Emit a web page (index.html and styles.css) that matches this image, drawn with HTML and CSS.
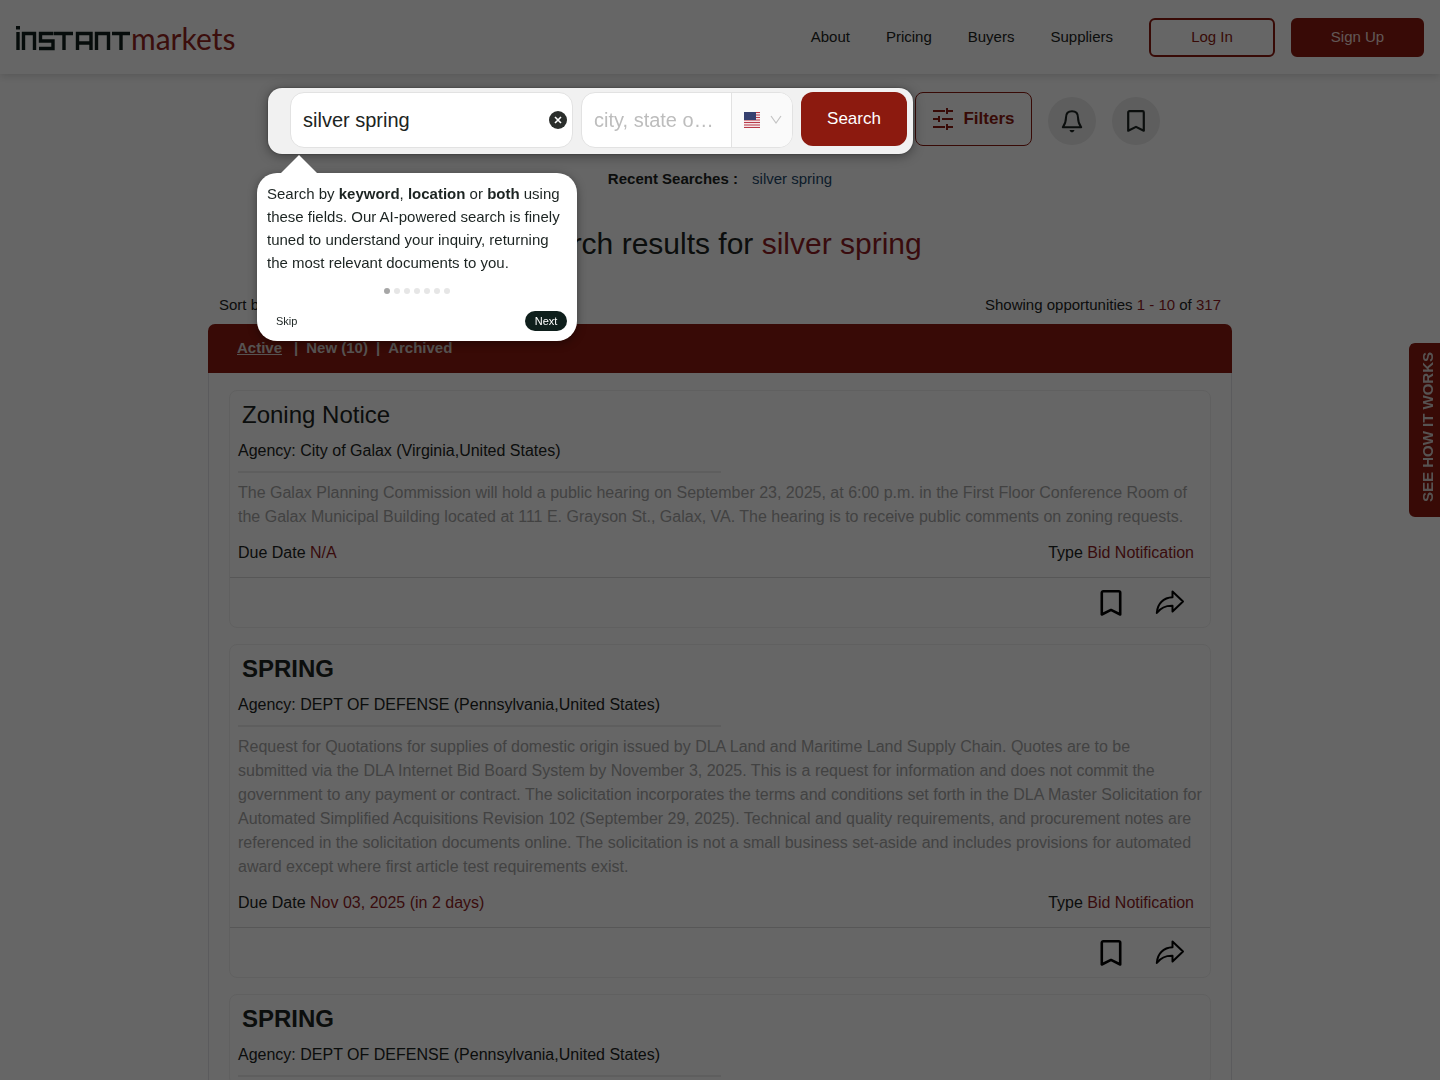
FILE: index.html
```html
<!DOCTYPE html>
<html lang="en">
<head>
<meta charset="utf-8">
<meta name="viewport" content="width=device-width, initial-scale=1">
<title>Instant Markets - Search results</title>
<link rel="stylesheet" href="styles.css">
</head>
<body>
<svg class="defs" aria-hidden="true">
  <symbol id="i-bookmark" viewBox="0 0 24 24"><path d="M3.500 2.600C3.500 1.700 4.100 1.200 4.900 1.200h14.200c.800 0 1.400.500 1.400 1.400v20L12 18.400 3.500 22.600z" fill="none" stroke="currentColor" stroke-width="2.400" stroke-linejoin="round"/></symbol>
  <symbol id="i-share" viewBox="0 0 30 28"><path d="M17.500 2.500L28 12.500L17.500 22.500V16.800C10 16.600 6 18.500 1.800 24C2.400 14.500 8.500 8.600 17.500 8.200z" fill="none" stroke="currentColor" stroke-width="2" stroke-linejoin="round"/></symbol>
</svg>

<header class="topbar">
  <a class="logo" href="#" aria-label="Instant Markets home">
    <svg width="115" height="28" viewBox="0 0 115 28" aria-hidden="true">
      <path d="M2 9V27M7.500 27V10.500H18.500V27M37 10.500H24.500V18H37V25.500H23M37.500 10.500H57M48 10.500V27M61.500 27V10.500H75V27M61.500 20H75M80.500 27V10.500H92.500V27M96 10.500H114M105 10.500V27" fill="none" stroke="currentColor" stroke-width="3.400"/>
      <path d="M0 3h4v3.500H0z" fill="currentColor"/>
    </svg><span class="logo-word">markets</span>
  </a>
  <nav class="nav">
    <a href="#">About</a>
    <a href="#">Pricing</a>
    <a href="#">Buyers</a>
    <a href="#">Suppliers</a>
  </nav>
  <button class="btn btn-outline" type="button">Log In</button>
  <button class="btn btn-solid" type="button">Sign Up</button>
</header>

<main class="page">
  <div class="search-row">
    <form class="spotlight">
      <div class="field field-keyword">
        <input type="text" aria-label="Keyword" value="silver spring">
        <button class="clear" type="button" aria-label="Clear keyword">
          <svg width="18" height="18" viewBox="0 0 18 18"><circle cx="9" cy="9" r="9" fill="#2b2e2c"/><path d="M6 6l6 6M12 6l-6 6" stroke="#fff" stroke-width="1.600"/></svg>
        </button>
      </div>
      <div class="field field-place">
        <input type="text" aria-label="Location" placeholder="city, state or zip code">
        <button class="country" type="button" aria-label="Country: United States">
          <svg width="16" height="16" viewBox="0 0 16 16"><path fill="#f4e4e6" d="M0 0h16v16H0z"/><path d="M0 .500h16M0 3h16M0 5.500h16M0 8h16M0 10.500h16M0 13h16M0 15.500h16" stroke="#b93a49" stroke-width="1.200"/><path fill="#36406f" d="M0 0h12v8H0z"/></svg>
          <svg width="12" height="10" viewBox="0 0 12 10"><path d="M1 1l5 7 5-7" fill="none" stroke="#c4c4c4" stroke-width="1.200"/></svg>
        </button>
      </div>
      <button class="search-btn" type="submit">Search</button>

      <section class="tour" role="dialog" aria-label="Search tour">
        <p>Search by <b>keyword</b>, <b>location</b> or <b>both</b> using these fields. Our AI-powered search is finely tuned to understand your inquiry, returning the most relevant documents to you.</p>
        <div class="dots"><i class="on"></i><i></i><i></i><i></i><i></i><i></i><i></i></div>
        <div class="tour-actions">
          <button class="skip" type="button">Skip</button>
          <button class="next" type="button">Next</button>
        </div>
      </section>
    </form>
    <button class="filters" type="button">
      <svg width="22" height="22" viewBox="0 0 22 22" fill="none" stroke="currentColor" stroke-width="2" aria-hidden="true"><path d="M1 3h12M15 3h6M15 0v6M1 11h5M10 11h11M7 8v6M1 19h12M15 19h6M15 16v6"/></svg>
      Filters
    </button>
    <button class="round" type="button" aria-label="Alerts">
      <svg width="24" height="24" viewBox="0 0 24 24" fill="none" stroke="currentColor" stroke-width="2" stroke-linejoin="round" aria-hidden="true"><path d="M12 2.200c-4 0-6 2.800-6 6.300 0 5.500-1.200 7-3.200 9.700h18.400c-2-2.700-3.200-4.200-3.200-9.700 0-3.500-2-6.300-6-6.300z"/><path d="M9.500 21h5c-.500 1.600-1.400 2.300-2.500 2.300S10 22.600 9.500 21z" fill="currentColor" stroke="none"/></svg>
    </button>
    <button class="round" type="button" aria-label="Saved">
      <svg width="22" height="22" aria-hidden="true"><use href="#i-bookmark"/></svg>
    </button>
  </div>

  <p class="recent"><b>Recent Searches :</b> <a href="#">silver spring</a></p>
  <h1>Search results for <span class="red">silver spring</span></h1>

  <div class="results">
    <div class="meta">
      <span>Sort by</span>
      <span>Showing opportunities <span class="red">1 - 10</span> of <span class="red">317</span></span>
    </div>
    <nav class="tabs">
      <a class="current" href="#">Active</a><span class="bar first">|</span><a href="#">New (10)</a><span class="bar">|</span><a href="#">Archived</a>
    </nav>
    <div class="list">
      <article class="card">
        <h2 class="plain">Zoning Notice</h2>
        <p class="agency">Agency: City of Galax (Virginia,United States)</p>
        <hr>
        <p class="desc">The Galax Planning Commission will hold a public hearing on September 23, 2025, at 6:00 p.m. in the First Floor Conference Room of the Galax Municipal Building located at 111 E. Grayson St., Galax, VA. The hearing is to receive public comments on zoning requests.</p>
        <div class="facts"><span>Due Date <span class="red">N/A</span></span><span>Type <span class="red">Bid Notification</span></span></div>
        <div class="actions">
          <button type="button" aria-label="Save"><svg width="26" height="26"><use href="#i-bookmark"/></svg></button>
          <button type="button" aria-label="Share"><svg width="30" height="28"><use href="#i-share"/></svg></button>
        </div>
      </article>
      <article class="card">
        <h2>SPRING</h2>
        <p class="agency">Agency: DEPT OF DEFENSE (Pennsylvania,United States)</p>
        <hr>
        <p class="desc">Request for Quotations for supplies of domestic origin issued by DLA Land and Maritime Land Supply Chain. Quotes are to be submitted via the DLA Internet Bid Board System by November 3, 2025. This is a request for information and does not commit the government to any payment or contract. The solicitation incorporates the terms and conditions set forth in the DLA Master Solicitation for Automated Simplified Acquisitions Revision 102 (September 29, 2025). Technical and quality requirements, and procurement notes are referenced in the solicitation documents online. The solicitation is not a small business set-aside and includes provisions for automated award except where first article test requirements exist.</p>
        <div class="facts"><span>Due Date <span class="red">Nov 03, 2025 (in 2 days)</span></span><span>Type <span class="red">Bid Notification</span></span></div>
        <div class="actions">
          <button type="button" aria-label="Save"><svg width="26" height="26"><use href="#i-bookmark"/></svg></button>
          <button type="button" aria-label="Share"><svg width="30" height="28"><use href="#i-share"/></svg></button>
        </div>
      </article>
      <article class="card">
        <h2>SPRING</h2>
        <p class="agency">Agency: DEPT OF DEFENSE (Pennsylvania,United States)</p>
        <hr>
      </article>
    </div>
  </div>
</main>

<button class="side-tab" type="button">SEE HOW IT WORKS</button>
<div class="overlay"></div>
</body>
</html>
```
FILE: styles.css
```css
:root {
  --brand: #8c1a0f;
  --ink: #1c2422;
  --red: #8f1d24;
}

* { box-sizing: border-box; }

body {
  margin: 0;
  background: #fff;
  color: var(--ink);
  font: 16px/24px "Liberation Sans", Arial, sans-serif;
}

p, h1, h2 { margin: 0; }
a { color: inherit; text-decoration: none; }
button, input { font: inherit; color: inherit; }
button { padding: 0; border: 0; background: none; cursor: pointer; }
svg { display: block; flex: none; }
.defs { position: absolute; width: 0; height: 0; }
.red { color: var(--red); }

.overlay {
  position: fixed;
  inset: 0;
  z-index: 10;
  background: rgba(0, 0, 0, 0.6);
  pointer-events: none;
}

/* Header */
.topbar {
  display: flex;
  align-items: center;
  gap: 16px;
  height: 74px;
  padding: 0 16px;
  box-shadow: 0 2px 8px rgba(0, 0, 0, 0.15);
}
.logo { display: flex; align-items: center; color: #10201c; }
.logo-word {
  padding-top: 2px;
  color: #952420;
  font: 30px/32px Lato, "Open Sans", sans-serif;
}
.nav {
  display: flex;
  gap: 36px;
  margin: 0 20px 0 auto;
  font-size: 15px;
}
.btn {
  height: 39px;
  border: 2px solid var(--brand);
  border-radius: 6px;
  font-size: 15px;
}
.btn-outline { width: 126px; color: var(--brand); }
.btn-solid { width: 133px; background: var(--brand); color: #f3dcd8; }

/* Search */
.page { padding: 14px 16px 0; }
.search-row {
  display: flex;
  justify-content: center;
  align-items: center;
  gap: 16px;
  padding-right: 12px;
}
.spotlight {
  position: relative;
  z-index: 20;
  display: flex;
  gap: 8px;
  padding: 4px 6px 6px 22px;
  margin-right: -14px;
  background: #f1f1f1;
  border-radius: 14px;
  box-shadow: 0 0 1px 1px rgba(33, 33, 33, 0.2), 0 2px 12px rgba(0, 0, 0, 0.4);
}
.field {
  display: flex;
  align-items: center;
  height: 56px;
  overflow: hidden;
  border: 1px solid #e2e2e2;
  border-radius: 14px;
  background: #fff;
}
.field input {
  flex: 1;
  min-width: 0;
  height: 100%;
  padding: 0 0 0 12px;
  border: 0;
  outline: 0;
  background: none;
  font-size: 20px;
  text-overflow: ellipsis;
}
.field input::placeholder { color: #bdbdbd; opacity: 1; }
.field-keyword { width: 283px; padding-right: 5px; }
.field-place { width: 212px; }
.field-place input { padding-right: 16px; }
.country {
  display: flex;
  align-items: center;
  gap: 10px;
  width: 61px;
  height: 100%;
  padding: 0 12px;
  border-left: 1px solid #e2e2e2;
  background: #fafafa;
}
.search-btn {
  width: 106px;
  height: 54px;
  border-radius: 12px;
  background: var(--brand);
  color: #fff;
  font-size: 17px;
}
.filters {
  display: flex;
  align-items: center;
  justify-content: center;
  gap: 9px;
  width: 117px;
  height: 54px;
  margin-bottom: 4px;
  border: 1px solid var(--brand);
  border-radius: 8px;
  color: var(--brand);
  font-size: 17px;
  font-weight: 700;
}
.round {
  display: grid;
  place-items: center;
  width: 48px;
  height: 48px;
  border-radius: 50%;
  background: #ebebeb;
}

/* Tour bubble hanging under the search form */
.tour {
  position: absolute;
  top: 85px;
  left: -11px;
  width: 320px;
  padding: 9px 10px 10px;
  border-radius: 20px;
  background: #fff;
  box-shadow: 0 2px 10px rgba(0, 0, 0, 0.4);
  font-size: 15px;
  line-height: 23px;
}
.tour::before {
  content: "";
  position: absolute;
  top: -18px;
  left: 23px;
  border: solid transparent;
  border-width: 0 19px 19px;
  border-bottom-color: #fff;
}
.dots { display: flex; justify-content: center; gap: 4px; padding: 14px 0 17px; }
.dots i { width: 6px; height: 6px; border-radius: 50%; background: #e6e6e6; }
.dots .on { background: #a6a6a6; }
.tour-actions {
  display: flex;
  align-items: center;
  justify-content: space-between;
  padding-left: 9px;
  font-size: 11px;
  line-height: 20px;
}
.next {
  width: 42px;
  border-radius: 10px;
  background: #0f1f1c;
  color: #fff;
}

.recent { padding-top: 13px; text-align: center; font-size: 15px; }
.recent a { margin-left: 10px; color: #24496b; }
h1 { padding-top: 35px; text-align: center; font-size: 30px; font-weight: 400; line-height: 36px; }

/* Results */
.results { max-width: 1024px; margin: 0 auto; }
.meta {
  display: flex;
  justify-content: space-between;
  padding: 31px 11px 7px;
  font-size: 15px;
}
.tabs {
  display: flex;
  height: 49px;
  padding: 12px 29px;
  border-radius: 7px 7px 0 0;
  background: var(--brand);
  color: #d8cfcc;
  font-size: 15px;
  font-weight: 700;
}
.tabs .current { text-decoration: underline; }
.bar { margin: 0 8px; }
.bar.first { margin-left: 12px; }
.list {
  display: grid;
  gap: 16px;
  padding: 17px 20px;
  border: solid #e4e4e8;
  border-width: 0 1px;
}
.card { border: 1px solid #f0f0f0; border-radius: 8px; }
h2 { padding: 0 12px; font-size: 24px; line-height: 48px; }
h2.plain { font-weight: 400; }
.agency { padding: 0 8px; }
.card hr {
  width: 483px;
  height: 2px;
  margin: 8px;
  border: 0;
  background: #ebebeb;
}
.desc { padding: 0 8px; color: #a6a6a6; }
.facts { display: flex; justify-content: space-between; padding: 12px 16px 12px 8px; }
.actions {
  display: flex;
  justify-content: flex-end;
  align-items: center;
  gap: 31px;
  height: 50px;
  padding-right: 25px;
  border-top: 1px solid #dadada;
  color: #000;
}

.side-tab {
  position: fixed;
  top: 343px;
  right: 0;
  height: 174px;
  padding: 6px 7px 0 0;
  border-radius: 0 6px 6px 0;
  background: var(--brand);
  color: #d8cfcc;
  font-size: 15px;
  font-weight: 700;
  writing-mode: vertical-rl;
  transform: rotate(180deg);
}
```
